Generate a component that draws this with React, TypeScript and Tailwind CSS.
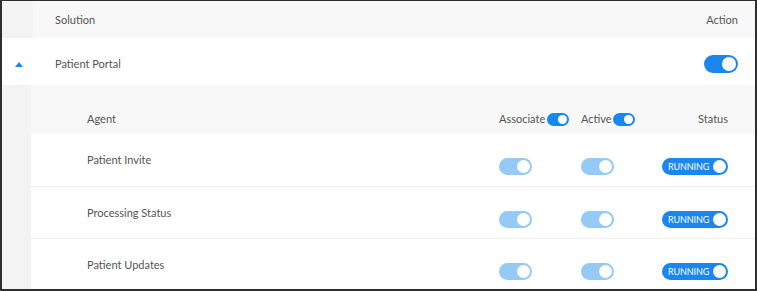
import React from "react";

function Toggle({ size = "md", light = false }: { size?: "sm" | "md" | "lg"; light?: boolean }) {
  const track =
    size === "lg"
      ? "w-[34px] h-[18px]"
      : size === "md"
      ? "w-[33px] h-[17px]"
      : "w-[22px] h-[13px]";
  const knob =
    size === "lg"
      ? "w-[14px] h-[14px]"
      : size === "md"
      ? "w-[13px] h-[13px]"
      : "w-[9px] h-[9px]";
  return (
    <div
      className={`${track} rounded-full flex items-center justify-end px-[2px] ${
        light ? "bg-[#95c9f6]" : "bg-[#1b86ee]"
      }`}
    >
      <div className={`${knob} rounded-full bg-white`} />
    </div>
  );
}

function StatusToggle() {
  return (
    <div className="w-[66px] h-[17px] rounded-full bg-[#1b86ee] flex items-center justify-between pl-[6px] pr-[2px]">
      <span className="text-[9px] leading-none text-white tracking-[-0.1px]">RUNNING</span>
      <div className="w-[13px] h-[13px] rounded-full bg-white" />
    </div>
  );
}

const agents = ["Patient Invite", "Processing Status", "Patient Updates"];

export default function App() {
  return (
    <div
      className="w-[757px] h-[291px] overflow-hidden border-t border-r-2 border-b-2 border-l-2 border-[#2e2e2e] bg-white text-[11px] text-[#555]"
      style={{ fontFamily: "Lato, 'Noto Sans', sans-serif" }}
    >
      {/* header */}
      <div className="flex h-[37px] bg-[#f8f8f8]">
        <div className="w-[31px] bg-[#f3f3f3]" />
        <div className="flex-1 flex items-center justify-between pl-[22px] pr-[17px] pt-[1px]">
          <span>Solution</span>
          <span>Action</span>
        </div>
      </div>

      {/* solution row */}
      <div className="flex h-[47px] bg-white pt-[5px]">
        <div className="w-[31px] flex items-center justify-center">
          <svg width="8" height="5" viewBox="0 0 8 5" className="ml-[2px]">
            <path d="M0 5 L4 0 L8 5 Z" fill="#1b86ee" />
          </svg>
        </div>
        <div className="flex-1 flex items-center justify-between pl-[22px] pr-[17px]">
          <span>Patient Portal</span>
          <Toggle size="lg" />
        </div>
      </div>

      {/* expanded agents */}
      <div className="flex bg-[#f5f5f5]">
        <div className="w-[29px] bg-[#f3f3f3]" />
        <div className="flex-1 flex flex-col">
          <div className="h-[49px] bg-[#f8f8f8] flex items-end pb-[7px] pl-[56px] pr-[27px]">
            <div className="flex-1 flex items-center h-[16px]">Agent</div>
            <div className="w-[82px] flex items-center gap-[2px] h-[16px]">
              <span>Associate</span>
              <Toggle size="sm" />
            </div>
            <div className="w-[81px] flex items-center gap-[1px] h-[16px]">
              <span>Active</span>
              <Toggle size="sm" />
            </div>
            <div className="w-[66px] flex items-center justify-end h-[16px]">Status</div>
          </div>
          {agents.map((name, i) => (
            <div
              key={name}
              className={`h-[52px] bg-white flex pl-[56px] pr-[27px] ${
                i > 0 ? "border-t border-[#eeeeee]" : ""
              }`}
            >
              <div className="flex-1 pt-[19px] leading-[14px]">{name}</div>
              <div className="w-[82px] pt-[24px]">
                <Toggle light />
              </div>
              <div className="w-[81px] pt-[24px]">
                <Toggle light />
              </div>
              <div className="w-[66px] pt-[24px] flex justify-end">
                <StatusToggle />
              </div>
            </div>
          ))}
        </div>
      </div>
    </div>
  );
}
